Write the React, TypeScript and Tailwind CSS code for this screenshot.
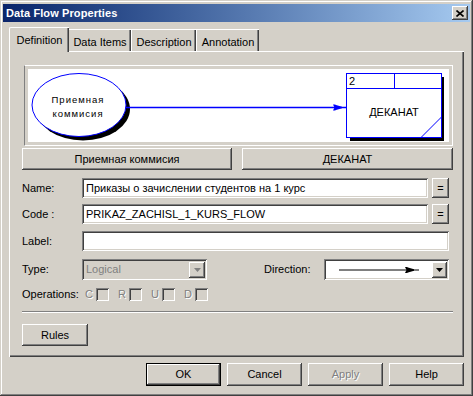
import React from "react";

const raised =
  "shadow-[inset_-1px_-1px_0_#404040,inset_1px_1px_0_#ffffff,inset_-2px_-2px_0_#808080,inset_2px_2px_0_#d4d0c8]";
const sunken =
  "shadow-[inset_1px_1px_0_#808080,inset_-1px_-1px_0_#ffffff,inset_2px_2px_0_#404040,inset_-2px_-2px_0_#d4d0c8]";

function Btn({ children, className = "", disabled = false, def = false }: { children?: React.ReactNode; className?: string; disabled?: boolean; def?: boolean }) {
  const inner = (
    <div className={`flex items-center justify-center bg-[#d4d0c8] w-full h-full ${raised}`}>
      {disabled ? (
        <span className="text-[#808080] [text-shadow:1px_1px_0_#ffffff]">{children}</span>
      ) : (
        <span className="text-black">{children}</span>
      )}
    </div>
  );
  if (def) return <div className={`border border-black ${className}`}>{inner}</div>;
  return <div className={className}>{inner}</div>;
}

function Field({ children, className = "", gray = false }: { children?: React.ReactNode; className?: string; gray?: boolean }) {
  return (
    <div className={`${gray ? "bg-[#d4d0c8]" : "bg-white"} ${sunken} h-[20px] flex items-center pl-[4px] ${className}`}>
      {children}
    </div>
  );
}

function DropArrow({ gray = false }: { gray?: boolean }) {
  return (
    <div className={`w-[16px] h-[16px] bg-[#d4d0c8] ${raised} flex items-center justify-center`}>
      <svg width="7" height="4" viewBox="0 0 7 4">
        <path d="M0 0 H7 L3.5 4 Z" fill={gray ? "#808080" : "#000"} />
      </svg>
    </div>
  );
}

function Check({ letter }: { letter: string }) {
  return (
    <div className="flex items-center w-[33px]">
      <span className="w-[11px] text-[#808080] [text-shadow:1px_1px_0_#ffffff]">{letter}</span>
      <div className={`w-[13px] h-[13px] bg-[#d4d0c8] ${sunken}`} />
    </div>
  );
}

function ArrowHead({ x, y, color }: { x: number; y: number; color: string }) {
  return (
    <path
      d={`M${x} ${y - 3} L${x + 2} ${y - 3} L${x + 3} ${y - 2.5} L${x + 9} ${y - 0.8} L${x + 9} ${y + 0.8} L${x + 3} ${y + 2.5} L${x + 2} ${y + 3} L${x} ${y + 3} L${x + 1.5} ${y} Z`}
      fill={color}
    />
  );
}

export default function App() {
  return (
    <div className="w-[473px] h-[396px] bg-[#d4d0c8] font-['Liberation_Sans',Arial,sans-serif] text-[11px] text-black shadow-[inset_-1px_-1px_0_#404040,inset_1px_1px_0_#d4d0c8,inset_-2px_-2px_0_#808080,inset_2px_2px_0_#ffffff] pt-[4px] px-[3px] flex flex-col select-none">
      {/* Title bar */}
      <div className="h-[18px] bg-gradient-to-r from-[#0a246a] to-[#a6caf0] flex items-center pl-[3px] pr-[2px]">
        <span className="text-white font-bold text-[11px] tracking-[0.1px]">Data Flow Properties</span>
        <div className={`ml-auto w-[16px] h-[14px] bg-[#d4d0c8] ${raised} flex items-center justify-center`}>
          <svg width="8" height="7" viewBox="0 0 8 7">
            <path d="M0.5 0.5 L7.5 6.5 M7.5 0.5 L0.5 6.5" stroke="#000" strokeWidth="1.6" />
          </svg>
        </div>
      </div>

      {/* Tabs */}
      <div className="mx-[6px] mt-[5px] flex items-end h-[25px] relative z-10">
        <div className="h-[25px] w-[60px] bg-[#d4d0c8] border-t border-l border-white rounded-tl-[2px] shadow-[inset_-1px_0_0_#404040,inset_-2px_0_0_#808080] flex items-start justify-center pt-[4px]">
          Definition
        </div>
        <div className="h-[22px] w-[62px] bg-[#d4d0c8] border-t border-white shadow-[inset_-1px_0_0_#404040,inset_-2px_0_0_#808080] flex items-start justify-center pt-[4px] mb-[1px]">
          Data Items
        </div>
        <div className="h-[22px] w-[65px] bg-[#d4d0c8] border-t border-l border-white shadow-[inset_-1px_0_0_#404040,inset_-2px_0_0_#808080] flex items-start justify-center pt-[4px] mb-[1px]">
          Description
        </div>
        <div className="h-[22px] w-[63px] bg-[#d4d0c8] border-t border-l border-white shadow-[inset_-1px_0_0_#404040,inset_-2px_0_0_#808080] flex items-start justify-center pt-[4px] mb-[1px]">
          Annotation
        </div>
      </div>

      {/* Panel */}
      <div className="mx-[6px] -mt-[1px] h-[306px] border-t border-l border-white shadow-[inset_-1px_-1px_0_#404040,inset_-2px_-2px_0_#808080] pl-[12px] pr-[11px] pt-[13px] flex flex-col">
        {/* Diagram */}
        <div className="ml-[2px] h-[81px] border-l border-b border-l-[#808080] border-b-white border-t border-r border-t-white border-r-white p-[3px]">
          <div className="bg-white w-full h-full">
            <svg width="416" height="73" viewBox="0 0 416 73">
              <ellipse cx="55" cy="40" rx="47" ry="31.5" fill="#000" />
              <ellipse cx="51" cy="36" rx="47" ry="31.5" fill="#fff" stroke="#0000ff" strokeWidth="1" />
              <text x="50" y="34" textAnchor="middle" fontSize="9.5" fontFamily="Liberation Sans, Arial, sans-serif" letterSpacing="1" fill="#000">Приемная</text>
              <text x="50" y="48" textAnchor="middle" fontSize="9.5" fontFamily="Liberation Sans, Arial, sans-serif" letterSpacing="1" fill="#000">коммисия</text>
              <line x1="98" y1="38.5" x2="318" y2="38.5" stroke="#0000ff" strokeWidth="1.3" />
              <ArrowHead x={305} y={38.5} color="#0000ff" />
              <rect x="322" y="8" width="95" height="64" fill="#000" />
              <rect x="318.5" y="4.5" width="95" height="64" fill="#fff" stroke="#0000ff" strokeWidth="1" />
              <line x1="318.5" y1="19.5" x2="413.5" y2="19.5" stroke="#0000ff" strokeWidth="1" />
              <line x1="366.5" y1="4.5" x2="366.5" y2="19.5" stroke="#0000ff" strokeWidth="1" />
              <line x1="393" y1="68.5" x2="413.5" y2="48" stroke="#0000ff" strokeWidth="1" />
              <text x="321" y="16" fontSize="11" fontFamily="Liberation Sans, Arial, sans-serif" fill="#000">2</text>
              <text x="366" y="47" textAnchor="middle" fontSize="11" fontFamily="Liberation Sans, Arial, sans-serif" fill="#000">ДЕКАНАТ</text>
            </svg>
          </div>
        </div>

        {/* Entity buttons */}
        <div className="flex gap-[10px] mt-[2px] h-[22px]">
          <Btn className="w-[210px] h-[22px]">Приемная коммисия</Btn>
          <Btn className="flex-1 h-[22px]">ДЕКАНАТ</Btn>
        </div>

        {/* Name */}
        <div className="flex items-center mt-[8px] pr-[4px]">
          <span className="w-[60px]">Name:</span>
          <Field className="flex-1">Приказы о зачислении студентов на 1 курс</Field>
          <Btn className="ml-[4px] w-[17px] h-[20px]">=</Btn>
        </div>

        {/* Code */}
        <div className="flex items-center mt-[6px] pr-[4px]">
          <span className="w-[60px]">Code :</span>
          <Field className="flex-1">PRIKAZ_ZACHISL_1_KURS_FLOW</Field>
          <Btn className="ml-[4px] w-[17px] h-[20px]">=</Btn>
        </div>

        {/* Label */}
        <div className="flex items-center mt-[7px] pr-[4px]">
          <span className="w-[60px]">Label:</span>
          <Field className="flex-1" />
        </div>

        {/* Type / Direction */}
        <div className="flex items-center mt-[8px] pr-[4px]">
          <span className="w-[60px]">Type:</span>
          <Field gray className="w-[125px] h-[21px] pr-[2px]">
            <span className="text-[#808080] flex-1">Logical</span>
            <DropArrow gray />
          </Field>
          <span className="ml-auto w-[60px]">Direction:</span>
          <Field className="w-[125px] h-[21px] pr-[2px]">
            <div className="flex-1 flex items-center">
              <svg width="104" height="10" viewBox="0 0 104 10">
                <line x1="11" y1="5" x2="91" y2="5" stroke="#000" strokeWidth="1" />
                <ArrowHead x={77} y={5} color="#000" />
              </svg>
            </div>
            <DropArrow />
          </Field>
        </div>

        {/* Operations */}
        <div className="flex items-center mt-[7px] h-[14px]">
          <span className="w-[63px]">Operations:</span>
          <Check letter="C" />
          <Check letter="R" />
          <Check letter="U" />
          <Check letter="D" />
        </div>

        {/* Separator */}
        <div className="mt-[10px] border-t border-t-[#808080] border-b border-b-white" />

        {/* Rules */}
        <div className="mt-[11px]">
          <Btn className="w-[66px] h-[22px]">Rules</Btn>
        </div>
      </div>

      {/* Bottom buttons */}
      <div className="mx-[6px] mt-[6px] flex justify-end gap-[6px]">
        <Btn def className="w-[75px] h-[23px]">OK</Btn>
        <Btn className="w-[75px] h-[23px]">Cancel</Btn>
        <Btn disabled className="w-[75px] h-[23px]">Apply</Btn>
        <Btn className="w-[75px] h-[23px]">Help</Btn>
      </div>
    </div>
  );
}
